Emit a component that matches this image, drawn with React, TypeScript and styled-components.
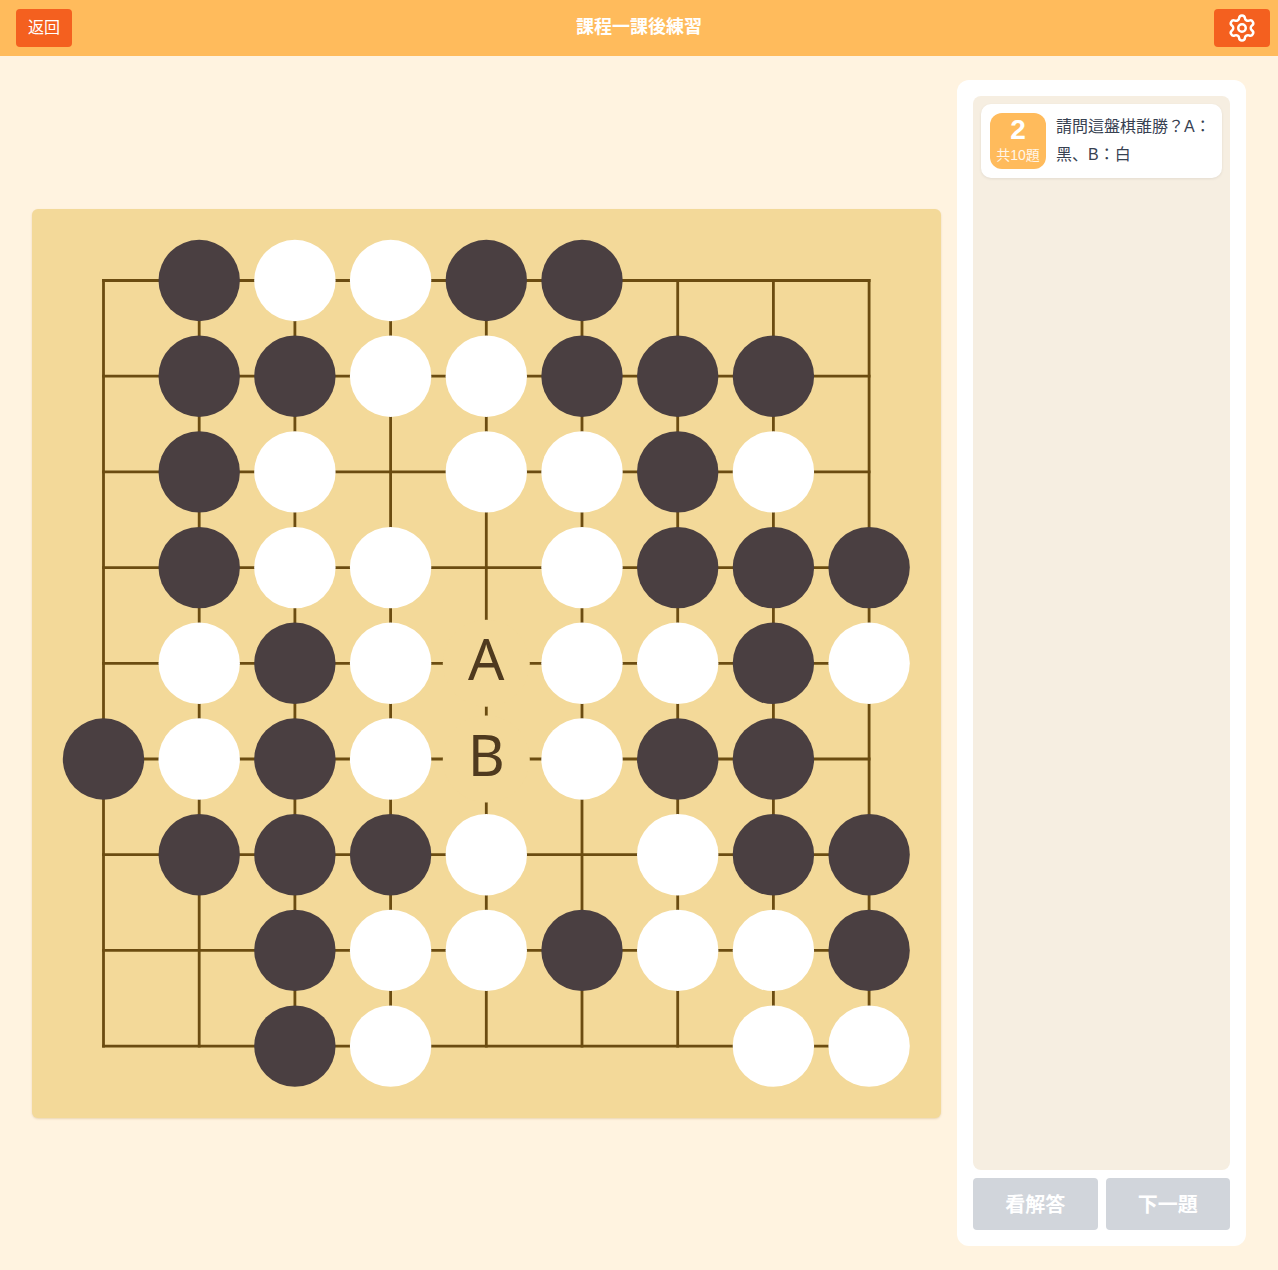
import React from 'react';
import styled, { createGlobalStyle } from 'styled-components';
import { Settings } from 'lucide-react';

// board rows, top to bottom: b = black, w = white, A / B = answer labels
const BOARD = [
  '.bwwbb...',
  '.bbwwbbb.',
  '.bw.wwbw.',
  '.bww.wbbb',
  '.wbwAwwbw',
  'bwbwBwbb.',
  '.bbbw.wbb',
  '..bwwbwwb',
  '..bw...ww',
];

const SIZE = 909;
const CELL = 95.7;
const ORIGIN = 71.5;
const at = (i: number) => ORIGIN + i * CELL;

const FONT = `"Liberation Sans", "Noto Sans CJK JP", sans-serif`;

const GlobalStyle = createGlobalStyle`
  html, body {
    margin: 0;
    padding: 0;
    background: #fff3e0;
    font-family: ${FONT};
  }
  * { box-sizing: border-box; }
`;

const Page = styled.div`
  width: 1278px;
  height: 1270px;
  display: flex;
  flex-direction: column;
  background: #fff3e0;
`;

const Header = styled.header`
  height: 56px;
  flex: none;
  display: grid;
  grid-template-columns: 1fr auto 1fr;
  align-items: center;
  padding: 0 8px;
  background: #ffbb5c;
`;

const HeaderButton = styled.button<{ $side: 'left' | 'right' }>`
  width: 56px;
  height: 38px;
  display: flex;
  align-items: center;
  justify-content: center;
  justify-self: ${(p) => (p.$side === 'left' ? 'start' : 'end')};
  margin-left: ${(p) => (p.$side === 'left' ? '8px' : '0')};
  padding: 0 0 ${(p) => (p.$side === 'left' ? '5px' : '0')};
  border: 0;
  border-radius: 4px;
  background: #f4601f;
  color: #fff;
  font-family: inherit;
  font-size: 16px;
`;

const Title = styled.h1`
  margin: 0 0 3px;
  color: #fff;
  font-size: 18px;
  line-height: 24px;
  font-weight: 700;
`;

const Main = styled.main`
  flex: 1;
  display: flex;
  align-items: center;
  gap: 16px;
  padding: 24px 32px;
`;

const Board = styled.div`
  width: ${SIZE}px;
  height: ${SIZE}px;
  flex: none;
  border-radius: 6px;
  background: #f3d999;
  box-shadow: 0 1px 2px rgba(170, 130, 50, 0.25);

  svg {
    display: block;
  }
`;

const Panel = styled.aside`
  flex: 1;
  height: 100%;
  display: flex;
  flex-direction: column;
  gap: 8px;
  padding: 16px;
  border-radius: 12px;
  background: #fff;
`;

const QuestionList = styled.div`
  flex: 1;
  padding: 8px;
  border-radius: 8px;
  background: #f6eee1;
`;

const QuestionCard = styled.div`
  display: flex;
  align-items: center;
  gap: 10px;
  padding: 9px;
  border-radius: 10px;
  background: #fff;
  box-shadow: 0 1px 3px rgba(0, 0, 0, 0.08);
`;

const Badge = styled.div`
  width: 56px;
  height: 56px;
  flex: none;
  display: flex;
  flex-direction: column;
  align-items: center;
  justify-content: center;
  padding-bottom: 2px;
  border-radius: 12px;
  background: #ffbb5c;
  color: #fff;
`;

const BadgeNumber = styled.span`
  font-size: 28px;
  line-height: 30px;
  font-weight: 700;
`;

const BadgeTotal = styled.span`
  font-size: 14px;
  line-height: 20px;
  white-space: nowrap;
  color: #fff6e8;
`;

const QuestionText = styled.p`
  margin: 0;
  color: #374151;
  font-size: 16px;
  line-height: 28px;
`;

const Actions = styled.div`
  display: grid;
  grid-template-columns: 1fr 1fr;
  gap: 8px;
`;

const ActionButton = styled.button`
  height: 52px;
  padding: 0 0 2px;
  border: 0;
  border-radius: 4px;
  background: #d1d5db;
  color: #fff;
  font-family: inherit;
  font-size: 20px;
  font-weight: 700;
`;

function BoardDrawing() {
  const lines = BOARD.map((_, i) => i);
  return (
    <svg width={SIZE} height={SIZE} viewBox={`0 0 ${SIZE} ${SIZE}`}>
      <g stroke="#6b4c11" strokeWidth={2.8}>
        {lines.map((i) => (
          <React.Fragment key={i}>
            <line x1={at(0) - 1.4} y1={at(i)} x2={at(8) + 1.4} y2={at(i)} />
            <line x1={at(i)} y1={at(0) - 1.4} x2={at(i)} y2={at(8) + 1.4} />
          </React.Fragment>
        ))}
      </g>
      {BOARD.map((row, y) =>
        row.split('').map((cell, x) => {
          if (cell === 'b' || cell === 'w') {
            return <circle key={`${x}-${y}`} cx={at(x)} cy={at(y)} r={40.7} fill={cell === 'b' ? '#4a3f41' : '#fff'} />;
          }
          if (cell === 'A' || cell === 'B') {
            return (
              <g key={`${x}-${y}`}>
                <circle cx={at(x)} cy={at(y)} r={43.5} fill="#f3d999" />
                <text
                  x={at(x)}
                  y={at(y) + 16.5}
                  textAnchor="middle"
                  fontFamily='"Noto Sans", sans-serif'
                  fontSize={57}
                  fill="#4f3a1f"
                >
                  {cell}
                </text>
              </g>
            );
          }
          return null;
        }),
      )}
    </svg>
  );
}

export default function App() {
  return (
    <Page>
      <GlobalStyle />
      <Header>
        <HeaderButton $side="left">返回</HeaderButton>
        <Title>課程一課後練習</Title>
        <HeaderButton $side="right" aria-label="設定">
          <Settings size={30} strokeWidth={2} />
        </HeaderButton>
      </Header>
      <Main>
        <Board>
          <BoardDrawing />
        </Board>
        <Panel>
          <QuestionList>
            <QuestionCard>
              <Badge>
                <BadgeNumber>2</BadgeNumber>
                <BadgeTotal>共10題</BadgeTotal>
              </Badge>
              <QuestionText>請問這盤棋誰勝{'\uFF1F'}A{'\uFF1A'}黑、B{'\uFF1A'}白</QuestionText>
            </QuestionCard>
          </QuestionList>
          <Actions>
            <ActionButton>看解答</ActionButton>
            <ActionButton>下一題</ActionButton>
          </Actions>
        </Panel>
      </Main>
    </Page>
  );
}
